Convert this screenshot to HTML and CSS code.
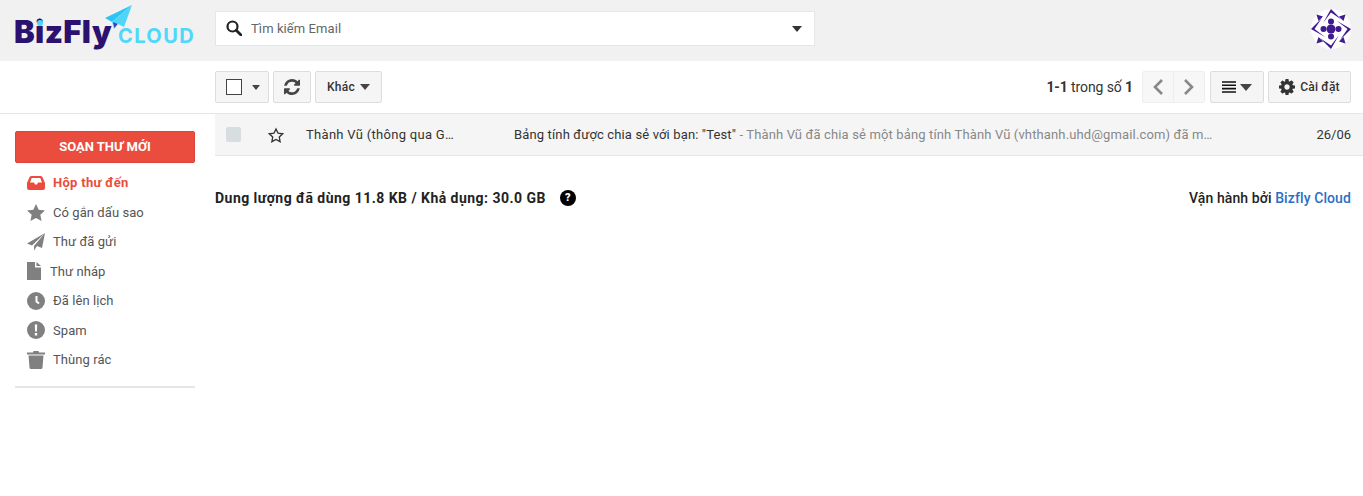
FILE: index.html
```html
<!DOCTYPE html>
<html lang="vi">
<head>
<meta charset="utf-8">
<title>Bizfly Mail</title>
<link rel="stylesheet" href="styles.css">
</head>
<body>
<header class="topbar">
  <div class="logo">
    <span class="logo-biz">BizFly</span><span class="logo-dot"></span><span class="logo-cloud">CLOUD</span>
    <svg class="logo-plane" viewBox="0 0 28 24" width="28" height="24"><path d="M27 0 0 13l7 4z" fill="#2cc4f4"/><path d="M27 0 7 17l2 7 4-5 6 3z" fill="#4fd5fa"/><path d="M8 17l1.500 6 3-4z" fill="#3b3fc0"/></svg>
  </div>
  <div class="search">
    <svg class="search-ico" viewBox="0 0 16 16" width="16" height="16"><circle cx="6.500" cy="6.500" r="5" fill="none" stroke="#222" stroke-width="2.200"/><path d="M10.200 10.200 15 15" stroke="#222" stroke-width="2.800" stroke-linecap="round"/></svg>
    <span class="search-text">Tìm kiếm Email</span>
    <span class="caret caret-dark"></span>
  </div>
  <svg class="avatar" viewBox="0 0 40 40" width="40" height="40">
    <defs>
      <g id="arm" fill="#3f1a8f">
        <path d="M20 0 31 11 20 3.500 12 14z"/>
        <path d="M5.500 5.500 12 7.500 7.500 12z"/>
        <circle cx="20" cy="12.500" r="3"/>
      </g>
    </defs>
    <circle cx="20" cy="20" r="20" fill="#fff"/>
    <use href="#arm"/>
    <use href="#arm" transform="rotate(90 20 20)"/>
    <use href="#arm" transform="rotate(180 20 20)"/>
    <use href="#arm" transform="rotate(270 20 20)"/>
    <circle cx="20" cy="20" r="4.500" fill="#3f1a8f"/>
  </svg>
</header>

<section class="toolbar">
  <div class="tools-left">
    <button class="btn btn-select"><span class="checkbox"></span><span class="caret caret-small"></span></button>
    <button class="btn btn-refresh">
      <svg viewBox="0 0 1536 1536" width="16" height="16"><path fill="#444" d="M1511 928q0 5-1 7-64 268-268 434.500T764 1536q-146 0-282.500-55T238 1324l-129 129q-19 19-45 19t-45-19-19-45V960q0-26 19-45t45-19h448q26 0 45 19t19 45-19 45l-137 137q71 66 161 102t187 36q134 0 250-65t186-179q11-17 53-117 8-23 30-23h192q13 0 22.500 9.500t9.500 22.500zm25-800v448q0 26-19 45t-45 19h-448q-26 0-45-19t-19-45 19-45l138-138q-148-137-349-137-134 0-250 65T332 500q-11 17-53 117-8 23-30 23H50q-13 0-22.500-9.500T18 608v-7q65-268 270-434.500T768 0q146 0 284 55.500T1297 212l130-129q19-19 45-19t45 19 19 45z"/></svg>
    </button>
    <button class="btn btn-more">Khác<span class="caret caret-mid"></span></button>
  </div>
  <div class="tools-right">
    <span class="count"><b>1-1</b> trong số <b>1</b></span>
    <div class="pager">
      <span class="pager-btn"><svg viewBox="0 0 12 18" width="12" height="18"><path d="M10 2 3 9l7 7" fill="none" stroke="#888" stroke-width="2.600"/></svg></span>
      <span class="pager-btn"><svg viewBox="0 0 12 18" width="12" height="18"><path d="m2 2 7 7-7 7" fill="none" stroke="#888" stroke-width="2.600"/></svg></span>
    </div>
    <button class="btn btn-view">
      <svg viewBox="0 0 14 12" width="14" height="12"><path d="M0 1h14M0 4.300h14M0 7.600h14M0 11h14" stroke="#111" stroke-width="1.600"/></svg>
      <span class="caret caret-view"></span>
    </button>
    <button class="btn btn-settings">
      <svg viewBox="0 0 1536 1536" width="16" height="16"><path fill="#333" d="M1024 768q0-106-75-181t-181-75-181 75-75 181 75 181 181 75 181-75 75-181zm512-109v222q0 12-8 23t-20 13l-185 28q-19 54-39 91 35 50 107 138 10 12 10 25t-9 23q-27 37-99 108t-94 71q-12 0-26-9l-138-108q-44 23-91 38-16 136-29 186-7 28-36 28H657q-14 0-24.500-8.500T621 1506l-28-184q-49-16-90-37l-141 107q-10 9-25 9-14 0-25-11-126-114-165-168-7-10-7-23 0-12 8-23 15-21 51-66.500t54-70.500q-27-50-41-99L29 913q-13-2-21-12.500T0 877V655q0-12 8-23t19-13l186-28q14-46 39-92-40-57-107-138-10-12-10-24 0-10 9-23 26-36 98.500-107.500T337 135q13 0 26 10l138 107q44-23 91-38 16-136 29-186 7-28 36-28h222q14 0 24.500 8.500T915 30l28 184q49 16 90 37l142-107q9-9 24-9 13 0 25 10 129 119 165 170 7 8 7 22 0 12-8 23-15 21-51 66.500t-54 70.500q26 50 41 98l183 28q13 2 21 12.500t8 23.500z"/></svg>
      <span class="settings-label">Cài đặt</span>
    </button>
  </div>
</section>

<div class="layout">
  <aside class="sidebar">
    <button class="compose">SOẠN THƯ MỚI</button>
    <ul class="nav">
      <li class="nav-item active">
        <svg class="nav-ico" viewBox="0 0 18 14" width="18" height="14"><path fill="#ea4c3d" fill-rule="evenodd" d="M4.500 0h9q1.200 0 1.900 1L18 7v5q0 2-2 2H2q-2 0-2-2V7l2.600-6Q3.300 0 4.500 0zM4.700 2 3 6.500h4l1 2h2l1-2h4L13.300 2z"/></svg>
        <span class="nav-l1">Hộp thư đến</span>
      </li>
      <li class="nav-item">
        <svg class="nav-ico" viewBox="0 0 18 17" width="18" height="17"><path fill="#808080" d="m9 0 2.700 5.800 6.300.7-4.700 4.300 1.300 6.200L9 13.900 3.400 17l1.300-6.200L0 6.500l6.300-.7z"/></svg>
        <span class="nav-l1">Có gắn dấu sao</span>
      </li>
      <li class="nav-item">
        <svg class="nav-ico" viewBox="0 0 18 18" width="18" height="18"><path fill="#808080" d="M18 0 15 15l-5-2-3 4.500V13zM18 0 0 10.500l5 2z"/></svg>
        <span class="nav-l1">Thư đã gửi</span>
      </li>
      <li class="nav-item">
        <svg class="nav-ico" viewBox="0 0 14 18" width="14" height="18"><path fill="#808080" d="M0 0h8v5.500h6V18H0zM9.500 0 14 4H9.500z"/></svg>
        <span class="nav-l2">Thư nháp</span>
      </li>
      <li class="nav-item">
        <svg class="nav-ico" viewBox="0 0 18 18" width="18" height="18"><circle cx="9" cy="9" r="9" fill="#808080"/><path d="M9.500 4v5.500l2.500 2" fill="none" stroke="#fff" stroke-width="2"/></svg>
        <span class="nav-l1">Đã lên lịch</span>
      </li>
      <li class="nav-item">
        <svg class="nav-ico" viewBox="0 0 18 18" width="18" height="18"><circle cx="9" cy="9" r="9" fill="#808080"/><path d="M7.800 3.500h2.400l-.3 7H8.100zM7.800 12h2.400v2.400H7.800z" fill="#fff"/></svg>
        <span class="nav-l1">Spam</span>
      </li>
      <li class="nav-item">
        <svg class="nav-ico" viewBox="0 0 18 18" width="18" height="18"><path fill="#808080" d="M6.500 0h5l.5 1.500h6v2H0v-2h6zM1.500 4.500h15l-1 12q-.1 1.500-1.500 1.500H4q-1.400 0-1.500-1.500z"/></svg>
        <span class="nav-l1">Thùng rác</span>
      </li>
    </ul>
    <hr class="side-rule">
  </aside>

  <main class="content">
    <div class="mail-row">
      <span class="mail-check"></span>
      <svg class="mail-star" viewBox="0 0 18 17" width="16" height="16"><path fill="none" stroke="#333" stroke-width="1.500" d="m9 1.700 2.300 4.800 5.200.7-3.800 3.600.9 5.200L9 13.500 4.400 16l.9-5.200-3.800-3.600 5.200-.7z"/></svg>
      <span class="mail-from">Thành Vũ (thông qua G…</span>
      <span class="mail-body"><span class="mail-subject">Bảng tính được chia sẻ với bạn: "Test"</span><span class="mail-snippet"> - Thành Vũ đã chia sẻ một bảng tính Thành Vũ (vhthanh.uhd@gmail.com) đã m…</span></span>
      <span class="mail-date">26/06</span>
    </div>
    <div class="footer-line">
      <div class="quota">
        <span class="footer-text">Dung lượng đã dùng 11.8 KB / Khả dụng: 30.0 GB</span>
        <span class="help">?</span>
      </div>
      <div class="powered footer-text">Vận hành bởi <span class="powered-link">Bizfly Cloud</span></div>
    </div>
  </main>
</div>
</body>
</html>
```

FILE: styles.css
```css
* { box-sizing: border-box; }
html, body { margin: 0; padding: 0; background: #fff; }
body { font-family: Roboto, "Liberation Sans", sans-serif; font-size: 13px; color: #333; height: 496px; overflow: hidden; }
ul { list-style: none; margin: 0; padding: 0; }
button { font-family: inherit; }

.topbar { height: 61px; background: #f1f1f1; display: flex; align-items: flex-start; padding-left: 15px; }
.logo { width: 200px; height: 61px; position: relative; flex: none; font-family: Inter, "Liberation Sans", sans-serif; }
.logo-biz { position: absolute; left: -1px; top: 14px; font-size: 31px; line-height: 36px; font-weight: 900; color: #2b1170; letter-spacing: .4px; }
.logo-dot { position: absolute; left: 22px; top: 20px; width: 6px; height: 6px; border-radius: 50%; background: #4fd5fa; }
.logo-cloud { position: absolute; left: 103px; top: 24px; font-size: 20px; line-height: 24px; font-weight: 700; color: #4fd8fb; letter-spacing: 1.400px; }
.logo-plane { position: absolute; left: 90px; top: 5px; }
.search { margin-top: 11px; width: 600px; height: 35px; background: #fff; border: 1px solid #e6e6e6; display: flex; align-items: center; padding: 0 12px 1px 10px; }
.search-ico { flex: none; }
.search-text { margin-left: 9px; color: #666; font-size: 13px; letter-spacing: .08px; flex: 1; }
.caret { display: inline-block; width: 0; height: 0; border-style: solid; border-color: #444 transparent transparent; }
.caret-dark { border-width: 6px 5.500px 0; border-top-color: #333; margin-top: 1px; }
.caret-small { border-width: 5px 4.500px 0; }
.caret-mid { border-width: 6px 5.500px 0; }
.caret-view { border-width: 7px 6.500px 0; }
.avatar { margin-left: auto; margin-top: 9px; margin-right: 12px; flex: none; }

.toolbar { height: 53px; border-bottom: 1px solid #e6e6e6; display: flex; justify-content: space-between; padding: 10px 12px 0 215px; }
.tools-left, .tools-right { display: flex; align-items: flex-start; }
.btn { height: 32px; background: #f5f5f5; border: 1px solid #ddd; border-radius: 2px; display: flex; align-items: center; justify-content: center; padding: 0; color: #333; font-size: 12px; font-weight: 500; }
.btn-select { width: 54px; gap: 10px; justify-content: flex-start; padding-left: 10px; }
.checkbox { width: 16px; height: 16px; border: 1.500px solid #444; background: #fff; }
.btn-refresh { width: 38px; margin-left: 4px; }
.btn-more { width: 67px; margin-left: 4px; gap: 5px; letter-spacing: .3px; }
.count { font-size: 14px; line-height: 32px; color: #333; margin-right: 9px; letter-spacing: -.1px; }
.count b { font-weight: 700; }
.pager { display: flex; width: 63px; height: 32px; background: #f7f7f7; border: 1px solid #eee; border-radius: 2px; }
.pager-btn { flex: 1; display: flex; align-items: center; justify-content: center; }
.pager-btn + .pager-btn { border-left: 1px solid #eee; }
.btn-view { width: 54px; margin-left: 5px; gap: 4px; }
.btn-settings { width: 83px; margin-left: 4px; gap: 5px; }
.settings-label { letter-spacing: .2px; }

.layout { display: flex; }
.sidebar { width: 215px; padding: 17px 20px 0 15px; flex: none; }
.compose { width: 180px; height: 32px; background: #ea4c3d; border: 1px solid #dd4538; border-radius: 2px; color: #fff; font-size: 13px; font-weight: 700; padding: 0 0 2px; }
.nav { padding: 5px 0 0 12px; }
.nav-item { height: 29.500px; display: flex; align-items: center; color: #555; font-size: 13px; letter-spacing: .07px; }
.nav-ico { flex: none; }
.nav-l1 { margin-left: 8px; }
.nav-l2 { margin-left: 9px; }
.active { color: #ea4c3d; font-weight: 700; letter-spacing: .3px; }
.side-rule { margin: 11px 0 0; border: 0; border-top: 2px solid #e6e6e6; }

.content { flex: 1; min-width: 0; }
.mail-row { height: 42px; background: #f5f5f5; border-bottom: 1px solid #e6e6e6; display: flex; align-items: center; padding-right: 12px; letter-spacing: .14px; }
.mail-check { width: 15px; height: 15px; background: #d8dde0; border-radius: 2px; margin-left: 11px; flex: none; }
.mail-star { margin-left: 27px; flex: none; }
.mail-from { width: 208px; margin-left: 22px; color: #333; flex: none; white-space: nowrap; letter-spacing: .3px; }
.mail-body { flex: 1; white-space: nowrap; overflow: hidden; }
.mail-subject { color: #333; }
.mail-snippet { color: #888; }
.mail-date { color: #333; flex: none; letter-spacing: 0; }
.footer-line { display: flex; justify-content: space-between; align-items: center; padding: 33px 12px 0 0; font-weight: 700; font-size: 14px; color: #222; }
.footer-text { padding-top: 1px; }
.quota { display: flex; align-items: center; gap: 14px; letter-spacing: .47px; }
.help { width: 16px; height: 16px; border-radius: 50%; background: #000; color: #fff; font-size: 11px; font-weight: 900; display: flex; align-items: center; justify-content: center; letter-spacing: 0; }
.powered { font-weight: 500; letter-spacing: .1px; }
.powered-link { color: #2a6fc4; }
```
